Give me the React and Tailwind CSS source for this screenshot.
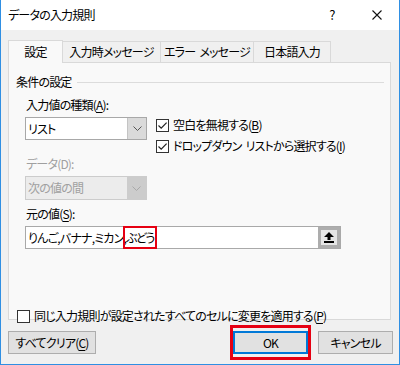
const font = '[font-family:"Noto_Sans_CJK_JP","Noto_Sans",sans-serif]';

const Check = ({ checked }) => (
  <span className="w-[13px] h-[13px] border border-[#333333] bg-white flex items-center justify-center shrink-0">
    {checked && (
      <svg width="11" height="11" viewBox="0 0 11 11">
        <path d="M1.5 5.5 L4.2 8.2 L9.6 2.6" stroke="#222" strokeWidth="1.2" fill="none" />
      </svg>
    )}
  </span>
);

const Chevron = ({ color }) => (
  <svg width="9" height="5" viewBox="0 0 9 5">
    <path d="M0.5 0.5 L4.5 4.5 L8.5 0.5" stroke={color} strokeWidth="1" fill="none" />
  </svg>
);

const Key = ({ k }) => (
  <span>
    (<u className="underline-offset-2">{k}</u>)
  </span>
);

const Gap = () => <span className="inline-block w-[4px]" />;

export default function App() {
  return (
    <div
      className={`w-[400px] h-[365px] bg-[#f0f0f0] border-x border-b border-[#2f8fe3] flex flex-col text-[12px] leading-[16px] tracking-[-0.8px] text-black ${font} [font-feature-settings:'palt']`}
    >
      {/* Title bar */}
      <div className="h-[30px] bg-white flex items-center pl-[7px] shrink-0">
        <span>データの入力規則</span>
        <span className="ml-auto w-[46px] text-center text-[13px]">?</span>
        <span className="w-[44px] flex justify-center">
          <svg width="10" height="10" viewBox="0 0 10 10">
            <path d="M0.5 0.5 L9.5 9.5 M9.5 0.5 L0.5 9.5" stroke="#111" strokeWidth="1.1" />
          </svg>
        </span>
      </div>

      {/* Body */}
      <div className="pl-[7px] pt-[10px] flex flex-col">
        {/* Tabs */}
        <div className="flex items-end">
          <div className="w-[55px] h-[23px] -mb-px relative z-10 border-t border-x border-[#d9d9d9] bg-[#f9f9f9] flex items-center justify-center">
            設定
          </div>
          <div className="w-[98px] h-[21px] border-t border-r border-[#d9d9d9] flex items-center justify-center">
            入力時メッセージ
          </div>
          <div className="w-[93px] h-[21px] border-t border-r border-[#d9d9d9] flex items-center justify-center">
            エラー<Gap />メッセージ
          </div>
          <div className="w-[77px] h-[21px] border-t border-r border-[#d9d9d9] flex items-center justify-center">
            日本語入力
          </div>
        </div>

        {/* Panel */}
        <div className="w-[383px] h-[258px] border border-[#d9d9d9] bg-[#f9f9f9] flex flex-col">
          <div className="mt-[11px] ml-[7px] mr-[6px] h-[16px] flex items-center">
            <span>条件の設定</span>
            <div className="flex-1 h-px bg-[#dcdcdc] ml-[5px]" />
          </div>

          <div className="ml-[16px] flex flex-col">
            <div className="mt-[7px] h-[16px] pl-[1px]">
              入力値の種類<Key k="A" />:
            </div>
            <div className="mt-[4px] flex items-start">
              <div className="w-[122px] h-[23px] border border-[#a8a8a8] bg-white flex">
                <div className="flex-1 flex items-center pl-[2px]">リスト</div>
                <div className="w-[19px] bg-[#dadada] border-l border-[#c4c4c4] flex items-center justify-center">
                  <Chevron color="#555" />
                </div>
              </div>
              <div className="ml-[9px] flex flex-col gap-[5px]">
                <div className="h-[16px] flex items-center gap-[4px]">
                  <Check checked />
                  <span>
                    空白を無視する<Key k="B" />
                  </span>
                </div>
                <div className="h-[16px] flex items-center gap-[4px]">
                  <Check checked />
                  <span>
                    ドロップダウン<Gap />リストから選択する<Key k="I" />
                  </span>
                </div>
              </div>
            </div>

            <div className="mt-[2px] h-[16px] pl-[1px] text-[#a0a0a0]">データ(D):</div>
            <div className="mt-[4px] w-[122px] h-[24px] border border-[#cccccc] bg-[#ececec] flex">
              <div className="flex-1 flex items-center pl-[2px] text-[#a0a0a0]">次の値の間</div>
              <div className="w-[19px] bg-[#cccccc] flex items-center justify-center">
                <Chevron color="#a8a8a8" />
              </div>
            </div>

            <div className="mt-[6px] h-[16px] pl-[1px]">
              元の値<Key k="S" />:
            </div>
            <div className="mt-[4px] w-[316px] h-[23px] border border-[#a9a9a9] bg-white flex items-stretch">
              <div className="flex-1 flex items-center pl-[2px]">
                <span>りんご,バナナ,ミカン,</span>
                <span className="relative self-stretch flex items-center tracking-[-1.6px]">
                  ぶどう
                  <span className="absolute -left-[3px] -right-[3px] -top-[1px] -bottom-[1px] border-2 border-[#e60012]" />
                </span>
                <span className="w-px h-[14px] bg-black ml-[2px]" />
              </div>
              <div className="w-[22px] border-[3px] border-[#adadad] bg-[#e5e5e5] flex items-center justify-center">
                <svg width="10" height="11" viewBox="0 0 10 11">
                  <path d="M5 0 L10 5 L6.5 5 L6.5 8 L3.5 8 L3.5 5 L0 5 Z" fill="#000" />
                  <rect x="0" y="9" width="10" height="2" fill="#000" />
                </svg>
              </div>
            </div>
          </div>

          <div className="mt-[59px] ml-[8px] h-[16px] flex items-center gap-[4px]">
            <Check />
            <span>
              同じ入力規則が設定されたすべてのセルに変更を適用する<Key k="P" />
            </span>
          </div>
        </div>

        {/* Buttons */}
        <div className="mt-[11px] flex">
          <div className="w-[88px] h-[23px] bg-[#e1e1e1] border border-[#adadad] flex items-center justify-center">
            すべてクリア<Key k="C" />
          </div>
          <div className="ml-[137px] w-[75px] h-[23px] relative">
            <div className="w-full h-full bg-[#e1e1e1] border-2 border-[#0078d7] flex items-center justify-center">
              OK
            </div>
            <span className="absolute -left-[3px] -right-[3px] -top-[6px] -bottom-[6px] border-[3px] border-[#e60012]" />
          </div>
          <div className="ml-[10px] w-[75px] h-[23px] bg-[#e1e1e1] border border-[#adadad] flex items-center justify-center">
            キャンセル
          </div>
        </div>
      </div>
    </div>
  );
}
